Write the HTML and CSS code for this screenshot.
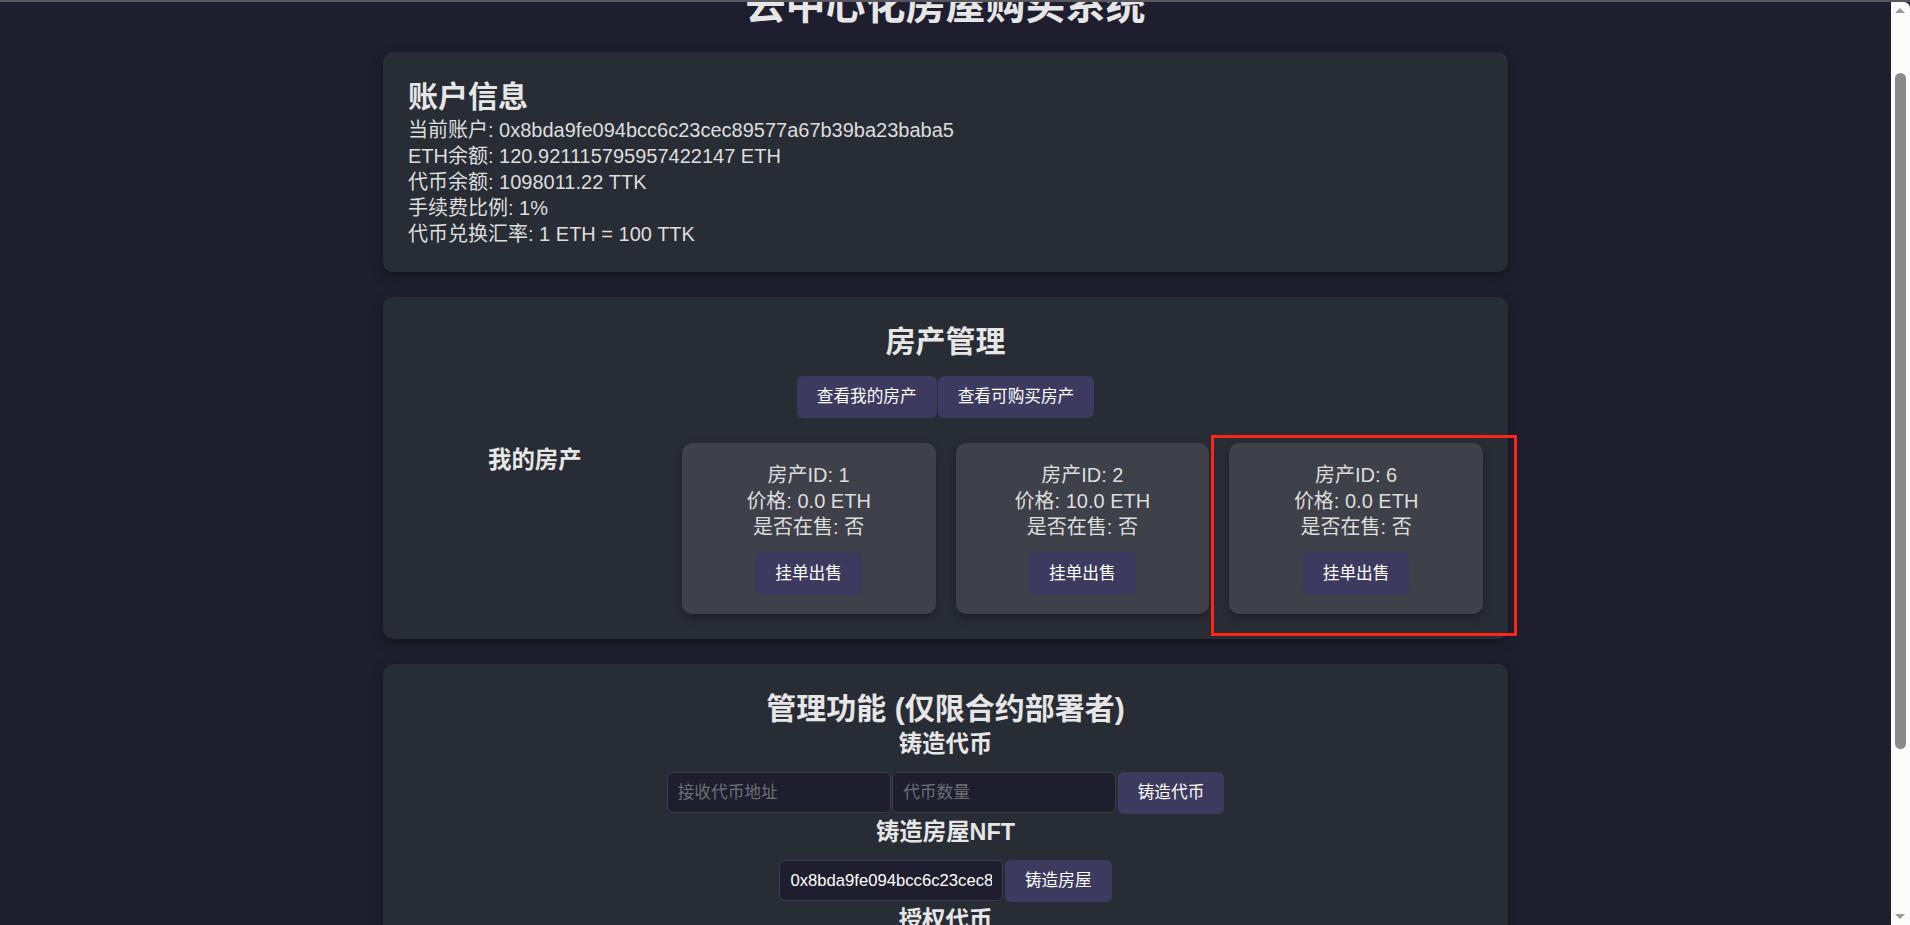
FILE: index.html
```html
<!DOCTYPE html>
<html lang="zh-CN">
<head>
<meta charset="utf-8">
<title>去中心化房屋购买系统</title>
<link rel="stylesheet" href="styles.css">
</head>
<body>
<div class="frame-top"></div>
<div class="window">
  <div class="viewport" id="viewport">
    <div class="app">
      <h1 class="app-title">去中心化房屋购买系统</h1>

      <section class="panel">
        <h2 class="panel-title panel-title-left">账户信息</h2>
        <p class="info-line">当前账户: 0x8bda9fe094bcc6c23cec89577a67b39ba23baba5</p>
        <p class="info-line">ETH余额: 120.921115795957422147 ETH</p>
        <p class="info-line">代币余额: 1098011.22 TTK</p>
        <p class="info-line">手续费比例: 1%</p>
        <p class="info-line">代币兑换汇率: 1 ETH = 100 TTK</p>
      </section>

      <section class="panel">
        <h2 class="panel-title">房产管理</h2>
        <div class="tab-row">
          <button class="btn">查看我的房产</button>
          <button class="btn">查看可购买房产</button>
        </div>
        <div class="property-grid">
          <h3 class="grid-label">我的房产</h3>
          <div class="property-card">
            <p>房产ID: 1</p>
            <p>价格: 0.0 ETH</p>
            <p>是否在售: 否</p>
            <button class="btn card-btn">挂单出售</button>
          </div>
          <div class="property-card">
            <p>房产ID: 2</p>
            <p>价格: 10.0 ETH</p>
            <p>是否在售: 否</p>
            <button class="btn card-btn">挂单出售</button>
          </div>
          <div class="property-card">
            <p>房产ID: 6</p>
            <p>价格: 0.0 ETH</p>
            <p>是否在售: 否</p>
            <button class="btn card-btn">挂单出售</button>
          </div>
        </div>
      </section>

      <section class="panel">
        <h2 class="panel-title">管理功能 (仅限合约部署者)</h2>
        <h3 class="sub-title">铸造代币</h3>
        <div class="form-row">
          <input class="field" type="text" placeholder="接收代币地址">
          <input class="field" type="text" placeholder="代币数量">
          <button class="btn">铸造代币</button>
        </div>
        <h3 class="sub-title">铸造房屋NFT</h3>
        <div class="form-row">
          <input class="field" type="text" value="0x8bda9fe094bcc6c23cec89577a67b39ba23baba5">
          <button class="btn">铸造房屋</button>
        </div>
        <h3 class="sub-title">授权代币</h3>
        <div class="form-row">
          <input class="field" type="text" placeholder="授权数量">
          <button class="btn">授权代币</button>
        </div>
        <h3 class="sub-title">设置手续费比例</h3>
        <div class="form-row">
          <input class="field" type="text" placeholder="手续费比例 (%)">
          <button class="btn">设置</button>
        </div>
      </section>
    </div>
  </div>
  <div class="scrollbar">
    <div class="sb-arrow sb-up"></div>
    <div class="sb-track">
      <div class="sb-thumb"></div>
    </div>
    <div class="sb-arrow sb-down"></div>
  </div>
</div>
<div class="annotation"></div>
<script src="script.js"></script>
</body>
</html>
```
FILE: styles.css
```css
* { box-sizing: border-box; }

html, body {
  margin: 0;
  height: 100%;
}

body {
  background: #1e1e2e;
  color: #dedede;
  font-family: "Liberation Sans", Arial, "Noto Sans CJK SC", sans-serif;
  font-size: 20px;
  line-height: 26px;
  display: flex;
  flex-direction: column;
  overflow: hidden;
}

.frame-top {
  height: 2px;
  flex: none;
  background: #56565c;
}

.window {
  flex: 1;
  min-height: 0;
  display: flex;
}

.viewport {
  flex: 1;
  overflow: hidden;
}

.app {
  max-width: 1125px;
  margin: 0 auto;
  padding: 20px 0 25px;
}

.app-title {
  margin: 0 0 24px;
  font-size: 40px;
  line-height: 46px;
  text-align: center;
  color: #e6e6e6;
}

.panel {
  background: #282c34;
  border-radius: 10px;
  padding: 25px;
  margin-bottom: 25px;
  box-shadow: 0 4px 12px rgba(0, 0, 0, 0.35);
}

.panel-title {
  margin: 0;
  font-size: 30px;
  line-height: 40px;
  text-align: center;
  color: #e6e6e6;
}

.panel-title-left { text-align: left; }

.info-line { margin: 0; }

.tab-row {
  display: flex;
  justify-content: center;
  gap: 1px;
  margin: 13.5px 0 25.5px;
}

.btn {
  font-family: inherit;
  font-size: 16.67px;
  line-height: 20px;
  padding: 11px 20px;
  background: #3c3a5e;
  color: #ffffff;
  border: none;
  border-radius: 6px;
}

.property-grid {
  display: grid;
  grid-template-columns: repeat(4, 1fr);
  gap: 20px;
  align-items: start;
}

.grid-label {
  margin: 2px 0 0;
  font-size: 23.4px;
  line-height: 31px;
  text-align: center;
  color: #e6e6e6;
}

.property-card {
  display: flex;
  flex-direction: column;
  align-items: center;
  background: #3e4149;
  border-radius: 10px;
  padding: 18.75px;
  box-shadow: 0 4px 10px rgba(0, 0, 0, 0.3);
}

.property-card p { margin: 0; }

.card-btn {
  margin-top: 12.5px;
  padding: 11.25px 20px;
}

.sub-title {
  margin: 0 0 12px;
  font-size: 23.4px;
  line-height: 31px;
  text-align: center;
  color: #e6e6e6;
}

.form-row {
  display: flex;
  justify-content: center;
  align-items: baseline;
  gap: 1.5px;
  margin-bottom: 3px;
}

.field {
  width: 224px;
  height: 40.7px;
  padding: 0 10px;
  font-family: inherit;
  font-size: 16.67px;
  color: #ffffff;
  background: #1e1e2e;
  border: 1px solid #3d3d47;
  border-radius: 6px;
}

.field::placeholder { color: #6f6f76; }

.scrollbar {
  width: 19px;
  flex: none;
  background: #fbfbfb;
  display: flex;
  flex-direction: column;
  align-items: center;
  border-top-right-radius: 6px;
}

.sb-arrow {
  width: 19px;
  height: 17px;
  flex: none;
  position: relative;
}

.sb-up::after,
.sb-down::after {
  content: "";
  position: absolute;
  left: 4px;
  border-left: 5.5px solid transparent;
  border-right: 5.5px solid transparent;
}

.sb-up::after {
  top: 6px;
  border-bottom: 5px solid #9a9a9a;
}

.sb-down::after {
  bottom: 6px;
  border-top: 5px solid #9a9a9a;
}

.sb-track {
  flex: 1;
  width: 100%;
  display: flex;
  flex-direction: column;
  align-items: center;
  padding-top: 54px;
}

.sb-thumb {
  width: 11px;
  height: 676px;
  background: #8a8a8a;
  border-radius: 6px;
}

.annotation {
  position: fixed;
  left: 1211px;
  top: 435px;
  width: 306px;
  height: 201px;
  border: 3px solid #ff2418;
  pointer-events: none;
}
```
FILE: script.js
```js
(function () {
  var vp = document.getElementById('viewport');
  function setScroll() { vp.scrollTop = 40; }
  setScroll();
  window.addEventListener('load', setScroll);
})();
```
